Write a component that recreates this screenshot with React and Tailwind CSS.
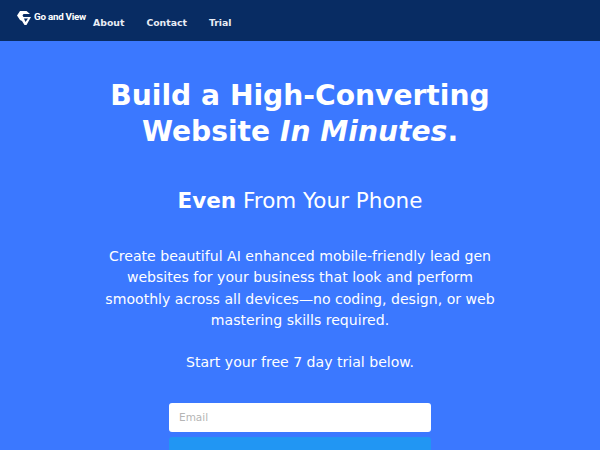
import React from 'react';

const Logo = () => (
  <div className="flex items-center gap-[3px] mt-[-6px]">
    <svg width="14" height="14" viewBox="0 0 14 14" fill="#fff">
      <path d="M3 0 L9.5 0 L13 3 L6.5 3 L5.5 4.5 L6.5 6 L14 6 L9.5 14 L7.5 14 L5 10 L3 9 L0 4.5 Z" />
      <path d="M7 7.5 L11 7.5 L8.5 11 Z" fill="#082c63" />
    </svg>
    <span className="text-[9.8px] font-bold tracking-[-0.25px] text-white" style={{ fontFamily: 'Roboto, sans-serif' }}>Go and View</span>
  </div>
);

const App = () => {
  return (
    <div className="h-[450px] overflow-hidden bg-[#3b78ff] text-white" style={{ fontFamily: '"DejaVu Sans", sans-serif' }}>
      <nav className="h-[41px] bg-[#082c63] flex items-center pl-[17px]">
        <Logo />
        <div className="flex gap-[22px] ml-[7px] text-[9.3px] font-bold text-[#e8edf5] mt-[5px]">
          <span>About</span>
          <span>Contact</span>
          <span>Trial</span>
        </div>
      </nav>

      <main className="flex flex-col items-center text-center pt-[37px]">
        <h1 className="text-[28.16px] leading-[36px] font-bold">
          Build a High-Converting<br />
          Website <em>In Minutes</em>.
        </h1>
        <h2 className="text-[21.5px] leading-[28px] mt-[37px]">
          <strong>Even</strong> From Your Phone
        </h2>
        <p className="w-[400px] text-[14.08px] leading-[21.3px] mt-[31px]">
          Create beautiful AI enhanced mobile-friendly lead gen websites for your business that look and perform smoothly across all devices—no coding, design, or web mastering skills required.
        </p>
        <p className="text-[14.08px] leading-[21.6px] mt-[21px]">Start your free 7 day trial below.</p>

        <form className="w-[262px] mt-[29px] flex flex-col gap-[5px]">
          <input
            type="text"
            placeholder="Email"
            className="h-[29px] w-full rounded-[3px] bg-white px-[10px] text-[10.5px] text-gray-700 placeholder:text-[#b5b5b5] outline-none"
          />
          <button type="button" className="h-[36px] w-full rounded-[3px] bg-[#2196f3] text-[10.5px] font-bold text-white">
            Start My Free Trial
          </button>
        </form>
      </main>
    </div>
  );
};

export default App;
